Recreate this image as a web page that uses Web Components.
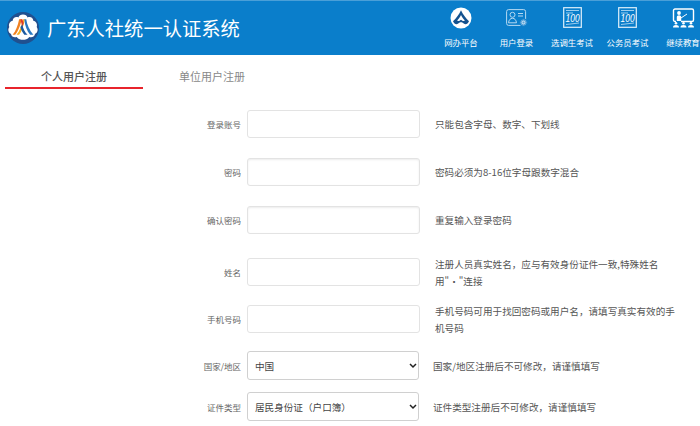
<!DOCTYPE html>
<html lang="zh"><head><meta charset="utf-8"><style>
html,body{margin:0;padding:0;background:#fff;overflow:hidden}
body{width:700px;height:426px;font-family:"Noto Sans CJK SC","Liberation Sans",sans-serif;color:#555}
</style></head><body>
<gd-header></gd-header>
<gd-tabs></gd-tabs>
<gd-form>
<form-row h="28" mt="0" label="登录账号">只能包含字母、数字、下划线</form-row>
<form-row h="28" mt="20" label="密码" shadow>密码必须为8-16位字母跟数字混合</form-row>
<form-row h="28" mt="20" label="确认密码" shadow>重复输入登录密码</form-row>
<form-row h="28" mt="24" label="姓名">注册人员真实姓名，应与有效身份证件一致,特殊姓名<br>用"·"连接</form-row>
<form-row h="28" mt="19" label="手机号码">手机号码可用于找回密码或用户名，请填写真实有效的手<br>机号码</form-row>
<form-row h="29" mt="18" label="国家/地区" select="中国">国家/地区注册后不可修改，请谨慎填写</form-row>
<form-row h="29" mt="12" label="证件类型" select="居民身份证（户口簿）">证件类型注册后不可修改，请谨慎填写</form-row>
</gd-form>
<script>
const ICONS={
 net:`<svg width="22" height="22" viewBox="0 0 22 22"><circle cx="11" cy="11" r="10.500" fill="#fff"/><path d="M11 3.200C9 7.500 6 11.500 3 14.200c1.200 2.800 3.300 3.600 5.200 2.400 1.200-.8 1.800-1.300 2.800-1.300s1.600.5 2.800 1.300c1.900 1.200 4 .4 5.200-2.400C16 11.500 13 7.500 11 3.200z" fill="#14528f"/><path d="M11 8c-1.200 2.300-2.600 4.200-4 5.600 1.400.9 2.400.5 4-.9 1.600 1.400 2.600 1.800 4 .9-1.400-1.400-2.800-3.300-4-5.600z" fill="#fff"/></svg>`,
 login:`<svg width="22" height="18" viewBox="0 0 22 18" fill="none" stroke="#b5d9f2" stroke-width="1"><rect x=".6" y=".6" width="19" height="15.800" rx="2"/><circle cx="6.500" cy="5.800" r="2.500"/><path d="M2.500 13.800c.4-3 1.900-4.500 4-4.500s3.600 1.500 4 4.500z"/><path d="M12 4.500h5M12 7h5"/><circle cx="17.500" cy="13.500" r="3.800" fill="#5aa5da" stroke="#0a7ecb"/><circle cx="17.500" cy="13.500" r="1.400" stroke="#cfe6f7"/></svg>`,
 exam:`<svg width="19" height="21" viewBox="0 0 19 21" fill="none"><rect x=".7" y=".7" width="17.600" height="19.600" stroke="#dff0fb" stroke-width="1.200"/><path d="M3 3.500h13M3 6h7" stroke="#9ccff0"/><text x="2.600" y="15.300" font-family="Liberation Sans,sans-serif" font-style="italic" font-size="10.500" textLength="14" lengthAdjust="spacingAndGlyphs" fill="#fff">100</text><path d="M3 17.500l13-1.500" stroke="#bfe0f6" stroke-width=".8"/></svg>`,
 edu:`<svg width="23" height="20" viewBox="0 0 23 20" fill="none"><path d="M4 13.500H3a1.500 1.500 0 0 1-1.500-1.500V2.500A1.500 1.500 0 0 1 3 1h17a1.500 1.500 0 0 1 1.500 1.500V12a1.500 1.500 0 0 1-1.500 1.500H9" stroke="#fff" stroke-width="1.400"/><circle cx="7" cy="5" r="1.900" fill="#fff"/><path d="M4.800 13V9c0-1 1-1.800 2.200-1.800S9.200 8 9.200 9v4z" fill="#fff"/><path d="M9 10l6-4" stroke="#fff"/><circle cx="4" cy="15.300" r="1.300" fill="#fff"/><circle cx="11.500" cy="15.300" r="1.300" fill="#fff"/><circle cx="19" cy="15.300" r="1.300" fill="#fff"/><path d="M1 19.500c0-1.800 1.300-2.500 3-2.500s3 .7 3 2.500zM8.500 19.500c0-1.800 1.300-2.500 3-2.500s3 .7 3 2.500zM16 19.500c0-1.800 1.300-2.500 3-2.500s3 .7 3 2.500z" fill="#fff"/></svg>`};
const CHEV=`url("data:image/svg+xml,%3Csvg xmlns='http://www.w3.org/2000/svg' width='8' height='6' viewBox='0 0 8 6'%3E%3Cpath d='M1 1l3 3 3-3' fill='none' stroke='%23222' stroke-width='1.500'/%3E%3C/svg%3E")`;
class Base extends HTMLElement{
 render(html){(this.shadowRoot||this.attachShadow({mode:'open'})).innerHTML=html}
}
customElements.define('nav-item',class extends Base{connectedCallback(){
 this.render(`<style>:host{display:flex;flex-direction:column;align-items:center;width:55.500px;flex:none;font-size:8.400px;color:#fff;white-space:nowrap}
 .i{height:21px;display:flex;align-items:center;justify-content:center}
 .t{margin-top:8px;line-height:12px}</style><div class="i">${ICONS[this.getAttribute('icon')]}</div><div class="t"><slot></slot></div>`)}});
customElements.define('gd-header',class extends Base{connectedCallback(){
 this.render(`<style>:host{display:flex;box-sizing:border-box;height:55px;background:#0a7ecb;border-top:1px solid #4a9fd8;align-items:center;padding-left:7px;overflow:hidden}
 .logo{flex:none;width:32px;height:32px;margin-right:8px;display:block}
 h1{margin:0;font-weight:400;font-size:19.300px;color:#fff;line-height:28px;white-space:nowrap;flex:1}
 nav{display:flex;flex:none;align-self:flex-start;padding-top:6px;margin-right:-10.750px}</style>
 <svg class="logo" viewBox="0 0 32 32"><circle cx="16" cy="16" r="16" fill="#20508f"/>
 <path d="M16 2.500c2.300 0 4 1.200 4.600 2.900 2.900-1.100 5.700.6 5.700 3.400 2.800.6 4.500 3.400 3.400 6.300 1.700 2.300 1.100 5.700-1.700 6.900-.6 2.800-3.400 4-5.700 2.900-1.700 2.300-4 2.900-6.300 2.900s-4.600-.6-6.300-2.900c-2.300 1.100-5.100 0-5.700-2.900-2.800-1.200-3.400-4.600-1.700-6.900-1.100-2.900.6-5.700 3.400-6.300 0-2.800 2.800-4.500 5.700-3.400.6-1.700 2.300-2.900 4.600-2.900z" fill="#fff"/>
 <g transform="translate(16 15) scale(1.300) translate(-16 -16)"><path d="M8 22c2.500-3 4-7 5-12h2c-1 5-3 9.500-5 12z" fill="#f08020"/><path d="M11 22c2.500-3 4-7 5-12h1.500c-1 5-2.500 9.500-4.500 12z" fill="#f6b01e"/>
 <path d="M14 10h1.500l1 3-1 3z" fill="#e03a2a"/><path d="M17 10h1.500c.5 4 2.500 8.500 5.500 12h-2.500c-2.500-3-4-7-4.500-12z" fill="#2a78c0"/><path d="M15.500 14c.5 3 2 6 4 8h-2.500c-1.500-2-2.500-4-3-6z" fill="#1b5aa0"/></g></svg>
 <h1>广东人社统一认证系统</h1>
 <nav><nav-item icon="net">网办平台</nav-item><nav-item icon="login">用户登录</nav-item><nav-item icon="exam">选调生考试</nav-item><nav-item icon="exam">公务员考试</nav-item><nav-item icon="edu">继续教育</nav-item></nav>`)}});
customElements.define('gd-tabs',class extends Base{connectedCallback(){
 this.render(`<style>:host{display:flex;height:34px;padding-left:5px;font-size:11px;line-height:14px}
 .t{box-sizing:border-box;width:138px;text-align:center;padding-top:14px}
 .a{color:#555;border-bottom:2px solid #e8242c;font-weight:500}
 .b{color:#888;margin-left:-2px;width:142px;padding-left:0}</style>
 <div class="t a">个人用户注册</div><div class="t b">单位用户注册</div>`)}});
customElements.define('gd-form',class extends Base{connectedCallback(){
 this.render(`<style>:host{display:block;padding-top:21px}</style><slot></slot>`)}});
customElements.define('form-row',class extends Base{connectedCallback(){
 const a=n=>this.getAttribute(n),sel=a('select'),h=a('h');
 const ctl=sel?`<select><option>${sel}</option></select>`:`<input type="text" class="${this.hasAttribute('shadow')?'s':''}">`;
 this.render(`<style>:host{display:grid;grid-template-columns:241px ${sel?178:179}px 1fr;grid-template-rows:${h}px;height:${h}px;margin-top:${a('mt')}px;align-items:center}
 label{font-size:8.500px;color:#666;text-align:right;white-space:nowrap}
 .c{margin-left:6px;height:${h}px}
 input,select{box-sizing:border-box;width:${sel?172:173}px;height:100%;display:block;margin:0;border:1px solid #e3e3e3;border-radius:3px;background:#fff;outline:none}
 input.s{box-shadow:inset 0 1px 2px rgba(0,0,0,.08)}
 select{appearance:none;-webkit-appearance:none;border-color:#d0d0d0;font:9.600px "Noto Sans CJK SC",sans-serif;color:#444;padding-left:7px;background:#fff ${CHEV} no-repeat right 1px center}
 .h{font-size:9.600px;line-height:17.500px;color:#555;margin-left:${sel?14:15}px;padding-top:2px;white-space:nowrap}</style>
 <label>${a('label')}</label><div class="c">${ctl}</div><div class="h"><slot></slot></div>`)}});
</script>
</body></html>
